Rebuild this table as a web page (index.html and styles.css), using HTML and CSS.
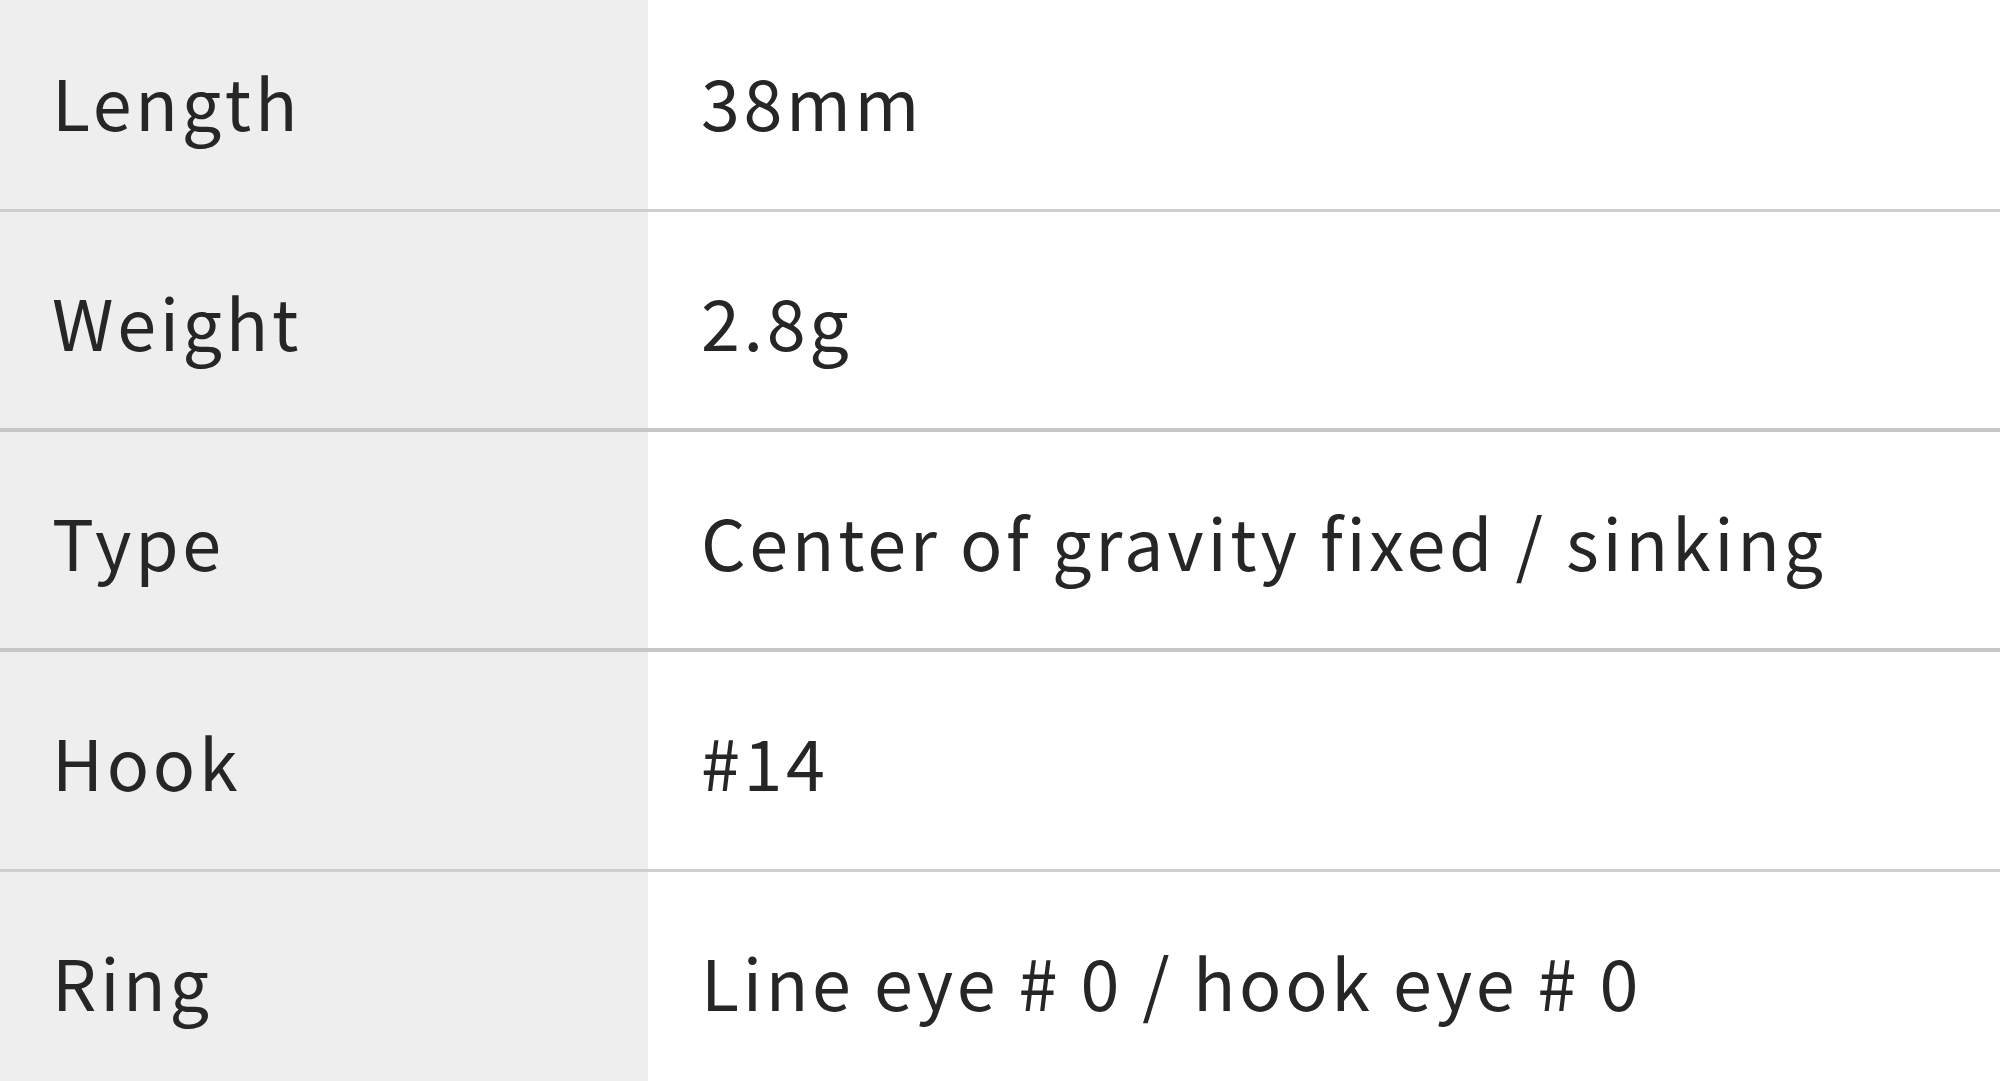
FILE: index.html
```html
<!DOCTYPE html>
<html lang="en">
<head>
<meta charset="utf-8">
<title>Spec</title>
<link rel="stylesheet" href="styles.css">
</head>
<body>
<div class="spec">
  <div class="row"><div class="label">Length</div><div class="value">38mm</div></div>
  <div class="row"><div class="label">Weight</div><div class="value">2.8g</div></div>
  <div class="row"><div class="label">Type</div><div class="value">Center of gravity fixed / sinking</div></div>
  <div class="row"><div class="label">Hook</div><div class="value">#14</div></div>
  <div class="row"><div class="label">Ring</div><div class="value">Line eye # 0 / hook eye # 0</div></div>
</div>
</body>
</html>
```
FILE: styles.css
```css
html, body {
  margin: 0;
  padding: 0;
  background: #ffffff;
  overflow: hidden;
}
.spec {
  margin-top: -8px;
  font-family: "Noto Sans CJK JP", "Noto Sans", sans-serif;
  font-size: 70px;
  letter-spacing: 3.7px;
  color: #262626;
}
.row {
  display: grid;
  grid-template-columns: 648px 1fr;
  height: 217px;
  border-bottom: 3px solid #cfcfcf;
}
.row:nth-child(2),
.row:nth-child(3) {
  height: 216px;
  border-bottom: 4px solid #c6c6c6;
}
.label {
  background: #eeeeee;
  padding-left: 52px;
  display: flex;
  align-items: center;
}
.value {
  padding-left: 53px;
  display: flex;
  align-items: center;
}
```
